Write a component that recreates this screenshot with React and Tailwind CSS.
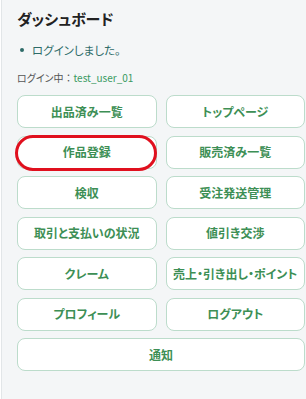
const buttons = [
    '出品済み一覧',
    'トップページ',
    '作品登録',
    '販売済み一覧',
    '検収',
    '受注発送管理',
    '取引と支払いの状況',
    '値引き交渉',
    'クレーム',
    '売上・引き出し・ポイント',
    'プロフィール',
    'ログアウト',
];

const App = () => {
    return (
        <div
            className="flex min-h-[399px] w-[306px] bg-[#f4f6f7] [font-feature-settings:'palt']"
            style={{ fontFamily: '"Noto Sans CJK JP", "Noto Sans", sans-serif' }}
        >
            {/* sidebar edge */}
            <div className="w-[2px] bg-white border-r border-[#e2e6e8]" />

            <div className="flex-1 pl-[15px] pr-[1px] pt-[8px]">
                <h1 className="text-[15px] font-bold text-[#222] leading-[22px]">ダッシュボード</h1>

                {/* Flash message */}
                <ul className="mt-[12px] pl-[3px]">
                    <li className="flex items-center gap-[8px] text-[11.5px] text-[#2d6b68] leading-[16px]">
                        <span className="w-[4px] h-[4px] rounded-full bg-[#2d6b68]" />
                        ログインしました。
                    </li>
                </ul>

                <p className="mt-[13px] text-[10px] text-[#555] leading-[14px]">
                    ログイン中<span className="[font-feature-settings:normal]">：</span>
                    <span className="text-[#3a9a62]">test_user_01</span>
                </p>

                {/* Menu */}
                <div className="mt-[10px] grid grid-cols-2 gap-x-[9px] gap-y-[7.5px]">
                    {buttons.map((label) => (
                        <div key={label} className="relative">
                            <button className="w-full h-[33px] flex items-center justify-center whitespace-nowrap bg-white border border-[#bcdccb] rounded-[8px] text-[12px] font-semibold text-[#3d8f55]">
                                {label}
                            </button>
                            {label === '作品登録' && (
                                <div className="absolute -left-[2px] -top-[1px] -bottom-[2px] right-0 border-[3px] border-[#e0101e] rounded-full pointer-events-none" />
                            )}
                        </div>
                    ))}
                    <button className="col-span-2 h-[33px] flex items-center justify-center bg-white border border-[#bcdccb] rounded-[8px] text-[12px] font-semibold text-[#3d8f55]">
                        通知
                    </button>
                </div>
            </div>
        </div>
    );
};

export default App;
